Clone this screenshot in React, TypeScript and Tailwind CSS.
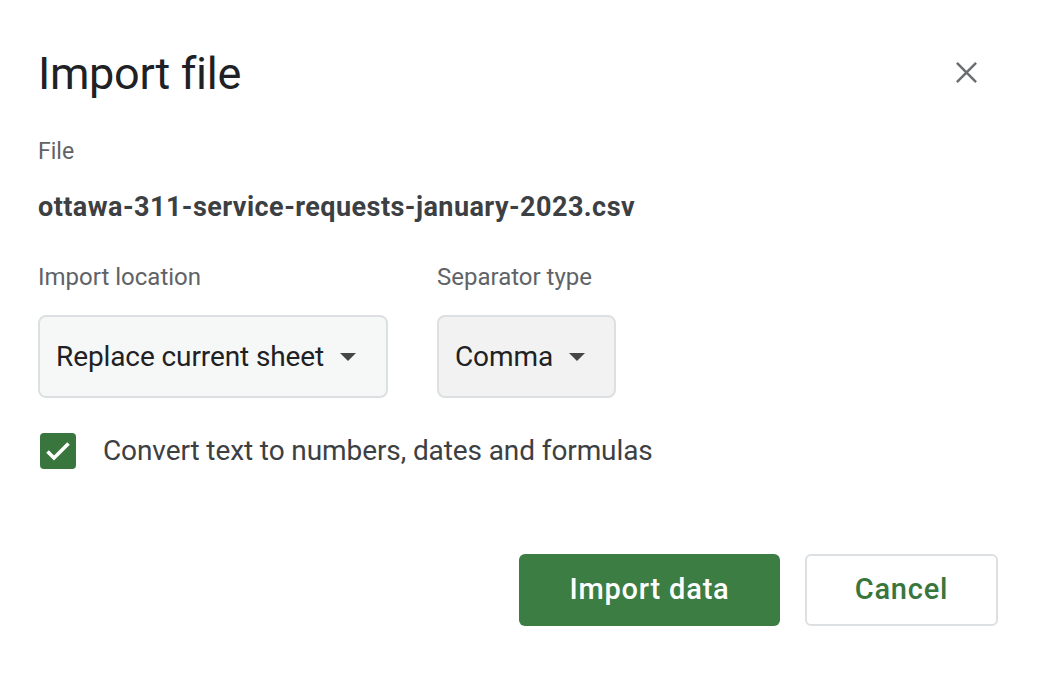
import { FC } from 'react';

const font = { fontFamily: 'Roboto, "Noto Sans", sans-serif' };

const Caret: FC = () => (
    <svg width="16" height="8" viewBox="0 0 16 8" className="shrink-0">
        <path d="M0 0h16L8 8z" fill="#444746" />
    </svg>
);

const SelectBox: FC<{ label: string; value: string; width: string; bg: string }> = ({ label, value, width, bg }) => (
    <div className="flex flex-col">
        <span className="text-[24px] leading-[28px] text-[#5f6368] mb-[24px]">{label}</span>
        <div
            className={`${width} ${bg} h-[83px] flex items-center gap-[16px] pl-[16px] border-2 border-[#dde0e3] rounded-[8px]`}
        >
            <span className="text-[28px] text-[#202124] tracking-[-0.1px]">{value}</span>
            <Caret />
        </div>
    </div>
);

export default function App() {
    return (
        <div className="w-[1038px] h-[674px] bg-white relative" style={font}>
            <div className="pl-[38px] pr-[40px] pt-[48px]">
                <div className="flex items-start justify-between">
                    <h1 className="text-[45px] leading-[52px] text-[#202124] tracking-[-0.3px]">Import file</h1>
                    <button className="mt-[6px] mr-[14px] w-[36px] h-[36px] flex items-center justify-center">
                        <svg width="23" height="23" viewBox="0 0 24 24">
                            <path d="M2 2L22 22M22 2L2 22" stroke="#6b6e71" strokeWidth="2.6" />
                        </svg>
                    </button>
                </div>

                <p className="mt-[38px] text-[23px] leading-[28px] text-[#5f6368]">File</p>
                <p className="mt-[26px] text-[27px] leading-[30px] font-bold text-[#3c4043] tracking-[0.45px]">
                    ottawa-311-service-requests-january-2023.csv
                </p>

                <div className="mt-[41px] flex gap-[49px]">
                    <SelectBox label="Import location" value="Replace current sheet" width="w-[350px]" bg="bg-[#f6f8f7]" />
                    <SelectBox label="Separator type" value="Comma" width="w-[179px]" bg="bg-[#f2f2f2]" />
                </div>

                <div className="mt-[32px] flex items-center gap-[27px] pl-[2px]">
                    <div className="w-[36px] h-[36px] rounded-[4px] bg-[#38763d] flex items-center justify-center">
                        <svg width="28" height="28" viewBox="0 0 28 28">
                            <path d="M3.5 14.5l6.5 6.5L24.5 6.5" stroke="#fff" strokeWidth="3.6" fill="none" />
                        </svg>
                    </div>
                    <span className="text-[28px] text-[#3c4043] tracking-[-0.1px]">Convert text to numbers, dates and formulas</span>
                </div>

                <div className="mt-[82px] flex justify-end gap-[25px]">
                    <button className="w-[261px] h-[72px] rounded-[6px] bg-[#3b7d43] text-white text-[29px] font-medium tracking-[0.8px]">
                        Import data
                    </button>
                    <button className="w-[193px] h-[72px] rounded-[6px] border-2 border-[#dde0e3] bg-white text-[#38763d] text-[29px] font-medium tracking-[0.8px]">
                        Cancel
                    </button>
                </div>
            </div>
        </div>
    );
}
